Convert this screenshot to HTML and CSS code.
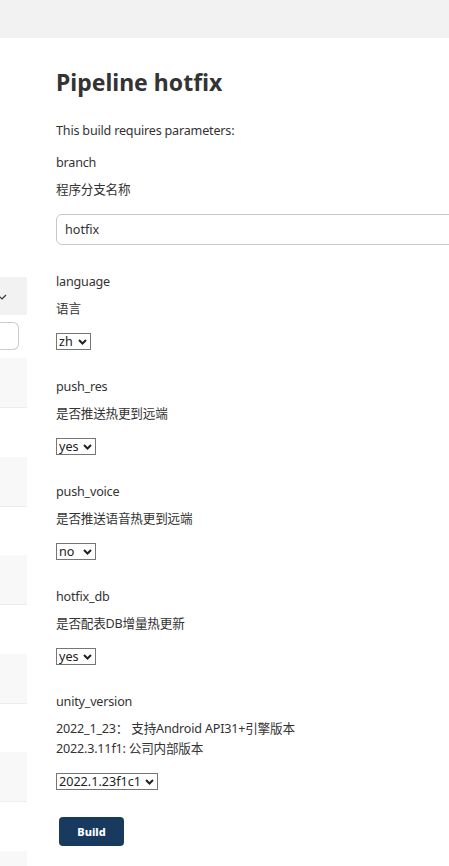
FILE: index.html
```html
<!DOCTYPE html>
<html lang="zh">
<head>
<meta charset="utf-8">
<title>Pipeline hotfix</title>
<link rel="stylesheet" href="styles.css">
</head>
<body>
<header class="topbar"></header>
<div class="page">
  <aside class="side">
    <div class="side-head">
      <svg class="side-chevron" width="8" height="6" viewBox="0 0 8 6"><polyline points="-2,1 2,5 6,1" fill="none" stroke="#333" stroke-width="1.2"/></svg>
    </div>
    <div class="side-search"></div>
    <div class="side-list">
      <div class="side-item"></div>
      <div class="side-item"></div>
      <div class="side-item"></div>
      <div class="side-item"></div>
      <div class="side-item"></div>
      <div class="side-item"></div>
    </div>
  </aside>
  <main class="main">
    <h1 class="title">Pipeline hotfix</h1>
    <p class="intro">This build requires parameters:</p>

    <div class="param">
      <div class="param-name">branch</div>
      <div class="param-desc">程序分支名称</div>
      <input class="text-input" type="text" value="hotfix">
    </div>

    <div class="param">
      <div class="param-name">language</div>
      <div class="param-desc">语言</div>
      <span class="select-wrap">
        <select class="select"><option>zh</option><option>en</option></select>
        <svg class="select-chevron" width="9" height="6" viewBox="0 0 9 6"><polyline points="1,1 4.5,4.5 8,1" fill="none" stroke="#222" stroke-width="2"/></svg>
      </span>
    </div>

    <div class="param">
      <div class="param-name">push_res</div>
      <div class="param-desc">是否推送热更到远端</div>
      <span class="select-wrap">
        <select class="select"><option>yes</option><option>no</option></select>
        <svg class="select-chevron" width="9" height="6" viewBox="0 0 9 6"><polyline points="1,1 4.5,4.5 8,1" fill="none" stroke="#222" stroke-width="2"/></svg>
      </span>
    </div>

    <div class="param">
      <div class="param-name">push_voice</div>
      <div class="param-desc">是否推送语音热更到远端</div>
      <span class="select-wrap">
        <select class="select"><option>no</option><option>yes</option></select>
        <svg class="select-chevron" width="9" height="6" viewBox="0 0 9 6"><polyline points="1,1 4.5,4.5 8,1" fill="none" stroke="#222" stroke-width="2"/></svg>
      </span>
    </div>

    <div class="param">
      <div class="param-name">hotfix_db</div>
      <div class="param-desc">是否配表DB增量热更新</div>
      <span class="select-wrap">
        <select class="select"><option>yes</option><option>no</option></select>
        <svg class="select-chevron" width="9" height="6" viewBox="0 0 9 6"><polyline points="1,1 4.5,4.5 8,1" fill="none" stroke="#222" stroke-width="2"/></svg>
      </span>
    </div>

    <div class="param">
      <div class="param-name">unity_version</div>
      <div class="param-desc">2022_1_23： 支持Android API31+引擎版本<br>2022.3.11f1: 公司内部版本</div>
      <span class="select-wrap">
        <select class="select"><option>2022.1.23f1c1</option><option>2022.3.11f1</option></select>
        <svg class="select-chevron" width="9" height="6" viewBox="0 0 9 6"><polyline points="1,1 4.5,4.5 8,1" fill="none" stroke="#222" stroke-width="2"/></svg>
      </span>
    </div>

    <button class="btn" type="button">Build</button>
  </main>
</div>
</body>
</html>
```

FILE: styles.css
```css
html, body {
  margin: 0;
  padding: 0;
  overflow: hidden;
  background: #fff;
}
body {
  font-family: "Noto Sans", "Noto Sans CJK SC", sans-serif;
  font-size: 12.6px;
  line-height: 20px;
  letter-spacing: -0.2px;
  color: #333;
  width: 449px;
  height: 866px;
}
.topbar {
  height: 38px;
  background: #f2f2f2;
}
.page {
  display: flex;
  overflow: hidden;
}
.side {
  width: 27px;
  flex: none;
  padding-top: 239px;
  display: flex;
  flex-direction: column;
  overflow: hidden;
}
.side-head {
  height: 38px;
  background: #f2f2f2;
  display: flex;
  align-items: center;
}
.side-chevron {
  display: block;
  margin-top: 2px;
}
.side-search {
  margin-top: 7px;
  width: 19px;
  height: 28px;
  box-sizing: border-box;
  border: 1px solid #c8ccd0;
  border-left: none;
  border-radius: 0 6px 6px 0;
}
.side-list {
  margin-top: 8px;
  display: flex;
  flex-direction: column;
  gap: 48.6px;
}
.side-item {
  height: 50px;
  box-sizing: border-box;
  background: #f8f8f8;
  border-bottom: 1px solid #ececec;
}
.main {
  flex: 1;
  min-width: 0;
  padding: 1px 0 0 29px;
  overflow: hidden;
}
.title {
  margin: 27px 0 0;
  font-size: 23px;
  line-height: 32px;
  font-weight: 700;
  letter-spacing: 0;
  color: #333;
}
.intro {
  margin: 23px 0 12px;
}
.param {
  margin-bottom: 27px;
}
.param-name {
  margin-bottom: 7px;
}
.param-desc {
  margin-bottom: 14px;
}
.text-input {
  display: block;
  box-sizing: border-box;
  width: 440px;
  height: 31px;
  margin: 0;
  padding: 0 8px;
  border: 1px solid #c3c9cf;
  border-radius: 6px;
  font: inherit;
  color: #333;
  background: #fff;
}
.select-wrap {
  position: relative;
  display: flex;
  width: max-content;
}
.select {
  display: block;
  -webkit-appearance: none;
  appearance: none;
  box-sizing: border-box;
  height: 17px;
  margin: 0;
  padding: 0 16px 0 2px;
  border: 1px solid #767676;
  border-radius: 0;
  background: #fff;
  font: inherit;
  line-height: 15px;
  color: #222;
}
.select-chevron {
  position: absolute;
  right: 4px;
  top: 6px;
  pointer-events: none;
}
.btn {
  display: block;
  margin: 0 0 0 3px;
  width: 65px;
  height: 29px;
  border: none;
  border-radius: 4px;
  background: #173a5e;
  color: #fff;
  font-family: "Noto Sans", sans-serif;
  font-size: 11px;
  font-weight: 800;
  letter-spacing: 0;
  padding: 0;
}
```
